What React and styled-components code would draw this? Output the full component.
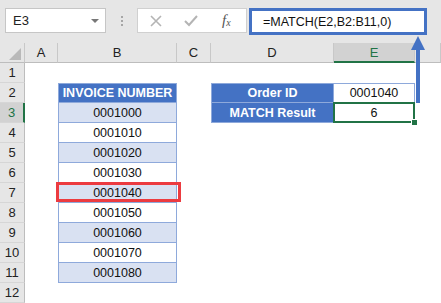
import React from "react";
import styled, { createGlobalStyle, css } from "styled-components";

const BLUE = "#4472c4";
const LINE = "#8ea9db";
const GREEN = "#217346";

const Global = createGlobalStyle`
  body {
    margin: 0;
    background: #fff;
    font-family: "Liberation Sans", Arial, sans-serif;
  }
`;

const Page = styled.div`
  position: relative;
  width: 441px;
  height: 303px;
  overflow: hidden;
  background: #fff;
`;

const Toolbar = styled.div`
  display: flex;
  align-items: flex-start;
  height: 43px;
  box-sizing: border-box;
  padding: 8px 0 0 5px;
  background: #e6e6e6;
`;

const NameBox = styled.div`
  display: flex;
  align-items: center;
  justify-content: space-between;
  width: 101px;
  height: 25px;
  box-sizing: border-box;
  padding: 0 6px 0 7px;
  background: #fff;
  border: 1px solid #c6c6c6;
  font-size: 13px;
  color: #222;
`;

const Caret = styled.span`
  width: 0;
  height: 0;
  border-left: 4px solid transparent;
  border-right: 4px solid transparent;
  border-top: 4px solid #777;
`;

const Dots = styled.div`
  display: flex;
  flex-direction: column;
  align-items: center;
  gap: 2px;
  width: 31px;
  padding-top: 8px;

  span {
    width: 2px;
    height: 2px;
    background: #a6a6a6;
  }
`;

const FxBox = styled.div`
  display: flex;
  align-items: center;
  width: 110px;
  height: 25px;
  box-sizing: border-box;
  padding-left: 12px;
  gap: 22px;
  background: #fff;
  border: 1px solid #d0d0d0;
`;

const Fx = styled.span`
  font-family: "Liberation Serif", "Times New Roman", serif;
  font-style: italic;
  font-size: 15px;
  color: #555;
  margin-left: 2px;

  sub {
    font-size: 10px;
    vertical-align: -1px;
  }
`;

const FormulaBox = styled.div`
  display: flex;
  align-items: center;
  margin-left: 2px;
  width: 178px;
  height: 27px;
  box-sizing: border-box;
  padding-left: 11px;
  border: 3px solid ${BLUE};
  background: #fff;
  font-size: 12.5px;
  color: #111;
`;

const Sheet = styled.div`
  display: grid;
  grid-template-columns: 25px 33px 119px 34px 123px 81px 1fr;
  grid-auto-rows: 20px;
`;

const ColHead = styled.div`
  position: relative;
  display: flex;
  align-items: center;
  justify-content: center;
  box-sizing: border-box;
  background: #e6e6e6;
  border-right: 1px solid #c8c8c8;
  border-bottom: 1px solid #bdbdbd;
  font-size: 13px;
  color: #222;

  ${(p) =>
    p.$active &&
    css`
      background: #d2d2d2;
      color: ${GREEN};
      border-bottom: 2px solid ${GREEN};
    `}
`;

const Corner = styled(ColHead)`
  align-items: flex-end;
  justify-content: flex-end;
  padding: 0 3px 2px 0;
`;

const RowHead = styled.div`
  display: flex;
  align-items: center;
  justify-content: center;
  box-sizing: border-box;
  background: #e6e6e6;
  border-right: 1px solid #bdbdbd;
  border-bottom: 1px solid #d6d6d6;
  font-size: 13px;
  color: #222;

  ${(p) =>
    p.$active &&
    css`
      background: #d2d2d2;
      color: ${GREEN};
      border-right: 2px solid ${GREEN};
    `}
`;

const Cell = styled.div`
  position: relative;
  display: flex;
  align-items: center;
  justify-content: center;
  box-sizing: border-box;
  font-size: 12.5px;
  color: #111;

  ${(p) =>
    p.$kind &&
    css`
      border-right: 1px solid ${LINE};
      border-bottom: 1px solid ${LINE};
    `}
  ${(p) => p.$top && css`border-top: 1px solid ${LINE};`}
  ${(p) => p.$left && css`border-left: 1px solid ${LINE};`}

  ${(p) =>
    p.$kind === "head" &&
    css`
      background: ${BLUE};
      color: #fff;
      font-weight: bold;
    `}
  ${(p) => p.$kind === "band" && css`background: #d9e1f2;`}
  ${(p) => p.$kind === "plain" && css`background: #fff;`}

  ${(p) =>
    p.$marked &&
    css`
      &::after {
        content: "";
        position: absolute;
        left: -3px;
        right: -5px;
        top: -1px;
        bottom: 0;
        border: 3px solid #ec3b40;
        z-index: 2;
      }
    `}

  ${(p) =>
    p.$selected &&
    css`
      &::after {
        content: "";
        position: absolute;
        inset: -1px;
        border: 2px solid ${GREEN};
        z-index: 2;
      }
      &::before {
        content: "";
        position: absolute;
        right: -4px;
        bottom: -4px;
        width: 5px;
        height: 5px;
        background: ${GREEN};
        border: 1px solid #fff;
        z-index: 3;
      }
    `}
`;

const Arrow = styled.svg`
  position: absolute;
  left: 409px;
  top: 36px;
  z-index: 5;
`;

const cols = ["A", "B", "C", "D", "E", ""];
const invoices = [
  "0001000", "0001010", "0001020", "0001030", "0001040",
  "0001050", "0001060", "0001070", "0001080",
];

const renderRow = (r) => {
  const cells = [];
  const b = r >= 3 && r <= 11 ? invoices[r - 3] : null;

  cells.push(<Cell key="A" />);
  if (r === 2) {
    cells.push(<Cell key="B" $kind="head" $top $left>INVOICE NUMBER</Cell>);
  } else if (b) {
    cells.push(
      <Cell key="B" $kind={r % 2 ? "band" : "plain"} $left $marked={r === 7}>
        {b}
      </Cell>
    );
  } else {
    cells.push(<Cell key="B" />);
  }
  cells.push(<Cell key="C" />);

  if (r === 2) {
    cells.push(<Cell key="D" $kind="head" $top $left>Order ID</Cell>);
    cells.push(<Cell key="E" $kind="plain" $top>0001040</Cell>);
  } else if (r === 3) {
    cells.push(<Cell key="D" $kind="head" $left>MATCH Result</Cell>);
    cells.push(<Cell key="E" $kind="plain" $selected>6</Cell>);
  } else {
    cells.push(<Cell key="D" />);
    cells.push(<Cell key="E" />);
  }
  cells.push(<Cell key="F" />);
  return cells;
};

export default function App() {
  const rows = Array.from({ length: 12 }, (_, i) => i + 1);
  return (
    <Page>
      <Global />
      <Toolbar>
        <NameBox>
          E3
          <Caret />
        </NameBox>
        <Dots>
          <span />
          <span />
          <span />
        </Dots>
        <FxBox>
          <svg width="12" height="12" viewBox="0 0 12 12">
            <path d="M1 1 L11 11 M11 1 L1 11" stroke="#b4b4b4" strokeWidth="1.6" />
          </svg>
          <svg width="14" height="12" viewBox="0 0 14 12">
            <path d="M1 6 L5 10 L13 1" stroke="#b4b4b4" strokeWidth="2" fill="none" />
          </svg>
          <Fx>
            f<sub>x</sub>
          </Fx>
        </FxBox>
        <FormulaBox>=MATCH(E2,B2:B11,0)</FormulaBox>
      </Toolbar>
      <Sheet>
        <Corner>
          <svg width="12" height="12" viewBox="0 0 12 12">
            <polygon points="12,0 12,12 0,12" fill="#b9b9b9" />
          </svg>
        </Corner>
        {cols.map((c, i) => (
          <ColHead key={i} $active={c === "E"}>
            {c}
          </ColHead>
        ))}
        {rows.map((r) => (
          <React.Fragment key={r}>
            <RowHead $active={r === 3}>{r}</RowHead>
            {renderRow(r)}
          </React.Fragment>
        ))}
      </Sheet>
      <Arrow width="18" height="68" viewBox="0 0 18 68">
        <line x1="9" y1="12" x2="9" y2="67" stroke={BLUE} strokeWidth="4" />
        <polygon points="9,0 2,14 16,14" fill={BLUE} />
      </Arrow>
    </Page>
  );
}
